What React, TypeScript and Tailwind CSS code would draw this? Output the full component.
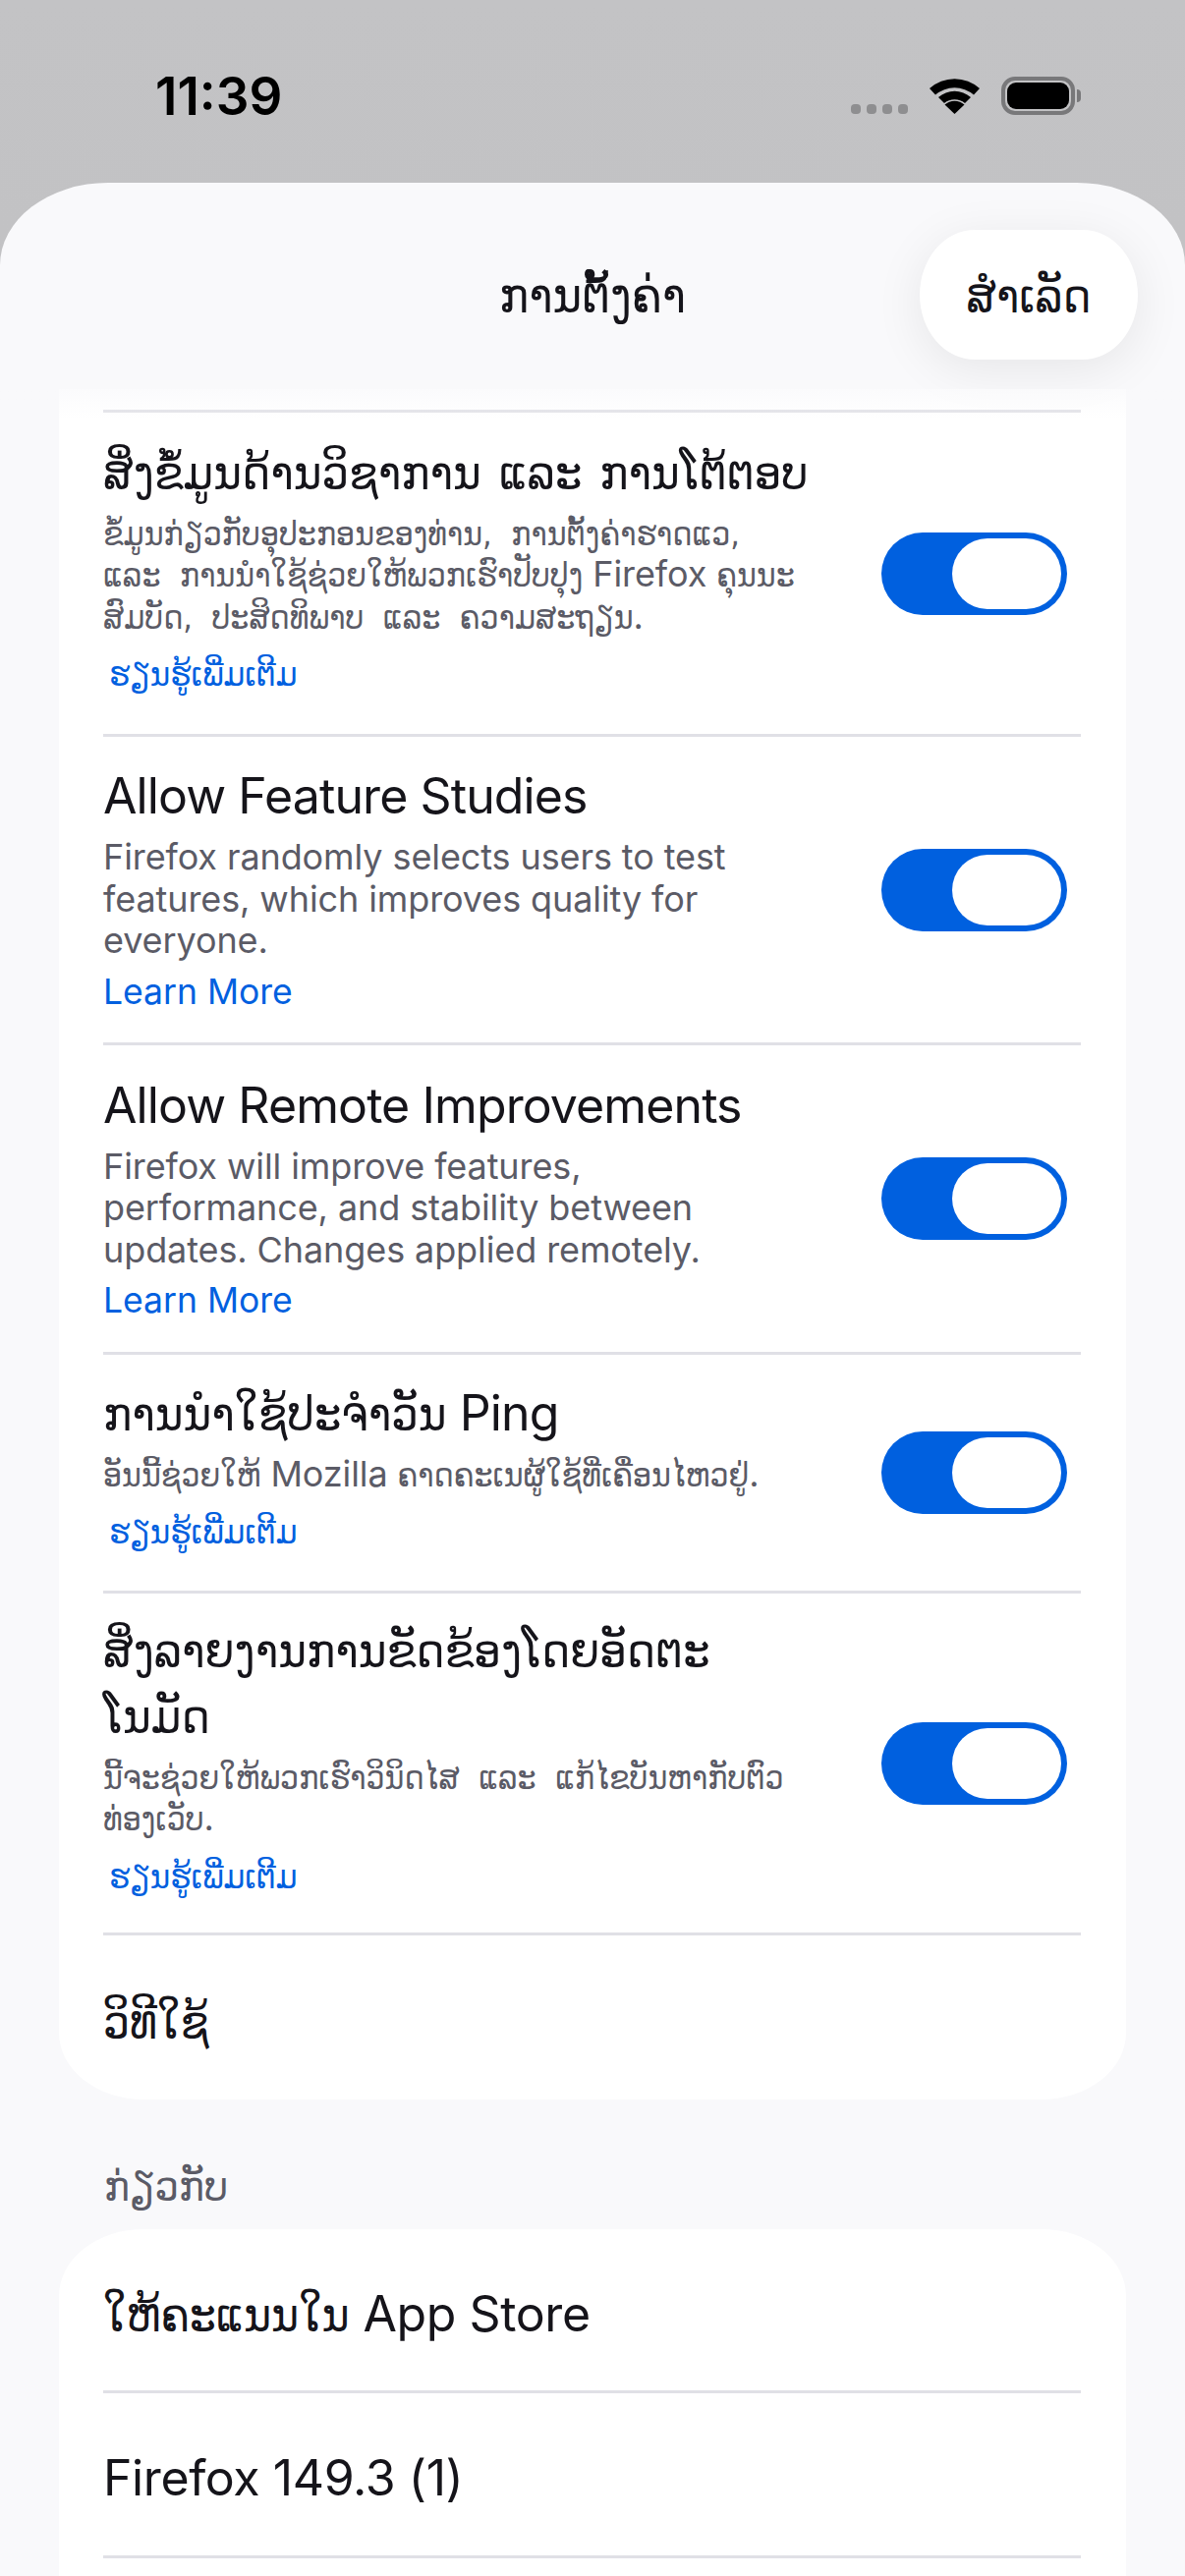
import type { ReactNode } from "react";

const learnMore = "ຮຽນຮູ້ເພີ່ມເຕີມ";

type Setting = {
    title: string;
    desc: string;
    link: string;
    height: string;
};

const settings: Setting[] = [
    {
        title: "ສິ່ງຂໍ້ມູນດ້ານວິຊາການ ແລະ ການໂຕ້ຕອບ",
        desc: "ຂໍ້ມູນກ່ຽວກັບອຸປະກອນຂອງທ່ານ, ການຕັ້ງຄ່າຮາດແວ, ແລະ ການນຳໃຊ້ຊ່ວຍໃຫ້ພວກເຮົາປັບປຸງ Firefox ຄຸນນະສົມບັດ, ປະສິດທິພາບ ແລະ ຄວາມສະຖຽນ.",
        link: learnMore,
        height: "h-[327px]",
    },
    {
        title: "Allow Feature Studies",
        desc: "Firefox randomly selects users to test features, which improves quality for everyone.",
        link: "Learn More",
        height: "h-[311px]",
    },
    {
        title: "Allow Remote Improvements",
        desc: "Firefox will improve features, performance, and stability between updates. Changes applied remotely.",
        link: "Learn More",
        height: "h-[312px]",
    },
    {
        title: "ການນຳໃຊ້ປະຈຳວັນ Ping",
        desc: "ອັນນີ້ຊ່ວຍໃຫ້ Mozilla ຄາດຄະເນຜູ້ໃຊ້ທີ່ເຄື່ອນໄຫວຢູ່.",
        link: learnMore,
        height: "h-[240px]",
    },
    {
        title: "ສິ່ງລາຍງານການຂັດຂ້ອງໂດຍອັດຕະ\nໂນມັດ",
        desc: "ນີ້ຈະຊ່ວຍໃຫ້ພວກເຮົາວິນິດໄສ ແລະ ແກ້ໄຂບັນຫາກັບຕົວທ່ອງເວັບ.",
        link: learnMore,
        height: "h-[345px]",
    },
];

// Lao runs get the condensed face and their own size, latin stays on Inter.
// Zero leading on the runs keeps each line at the height of its parent.
const mixed = (text: string, laoClass: string, latinClass: string): ReactNode =>
    text.split(/([\u0E80-\u0EFF]+(?:[ ,.]+[\u0E80-\u0EFF]+)*)/).map((part, i) =>
        part === "" ? null : (
            <span key={i} className={`leading-[0] ${/[\u0E80-\u0EFF]/.test(part) ? laoClass : latinClass}`}>
                {part}
            </span>
        )
    );

const laoFace = "font-['DejaVu_Sans_Condensed','DejaVu_Sans',sans-serif]";

const Toggle = () => (
    <div className="w-[189px] h-[84px] rounded-full bg-[#0060df] p-[6px] flex justify-end shrink-0">
        <div className="w-[111px] h-[72px] rounded-full bg-white" />
    </div>
);

const Separator = () => <div className="h-[3px] bg-[#e0e0e6]" />;

const SettingRow = ({ item }: { item: Setting }) => {
    const laoLink = item.link === learnMore;
    return (
        <div>
            <div className={`${item.height} flex items-center justify-between pr-[14px]`}>
                <div className={`w-[722px] flex flex-col ${laoLink ? "pb-[10px]" : ""}`}>
                    <div className="text-[50px] leading-[67px] whitespace-pre-line text-[#15141a]">
                        {mixed(item.title, `${laoFace} text-[48.5px] [word-spacing:4px]`, "text-[50px] tracking-[-0.9px]")}
                    </div>
                    <div className="text-[36px] leading-[42.5px] text-[#5b5b66] mt-[7px]">
                        {mixed(item.desc, `${laoFace} text-[33.5px] [word-spacing:10px]`, "text-[36px] tracking-[-0.1px]")}
                    </div>
                    <div className={`leading-[48px] text-[#0060df] ${laoLink ? `${laoFace} text-[34.5px] ml-[6px] mt-[14px]` : "text-[35.5px] mt-[7px]"}`}>
                        {item.link}
                    </div>
                </div>
                <Toggle />
            </div>
            <Separator />
        </div>
    );
};

const PlainRow = ({ label, height }: { label: string; height: string }) => (
    <div className={`${height} flex items-center pt-[8px] text-[50px] leading-[67px] text-[#15141a]`}>
        <div>{mixed(label, `${laoFace} text-[47.5px] [word-spacing:4px]`, "text-[50px] tracking-[-0.4px]")}</div>
    </div>
);

const App = () => {
    return (
        <div className="font-['Inter',sans-serif] w-[1206px] h-[2622px] overflow-hidden bg-gradient-to-b from-[#c3c3c5] to-[#b8b8ba] flex flex-col">
            {/* status bar */}
            <div className="h-[186px] shrink-0 flex justify-between pl-[158px] pr-[106px] pt-[68px]">
                <span className="text-[53px] leading-[60px] font-semibold text-black">11:39</span>
                <div className="flex items-start pt-[10px]">
                    <div className="flex gap-[6px] mt-[28px] mr-[22px]">
                        <span className="w-[10px] h-[10px] rounded-[4px] bg-[#8e8e90]" />
                        <span className="w-[10px] h-[10px] rounded-[4px] bg-[#8e8e90]" />
                        <span className="w-[10px] h-[10px] rounded-[4px] bg-[#8e8e90]" />
                        <span className="w-[10px] h-[10px] rounded-[4px] bg-[#8e8e90]" />
                    </div>
                    <svg width="51" height="37" viewBox="0 0 51 37" className="mt-[1px] mr-[22px]">
                        <path d="M25.5 37 L15.5 27.5 A15 15 0 0 1 35.5 27.5 Z" fill="#000" />
                        <path d="M9 20 A25 25 0 0 1 42 20 L36 26 A17 17 0 0 0 15 26 Z" fill="#000" />
                        <path d="M0 11 A38 38 0 0 1 51 11 L45 17.5 A30 30 0 0 0 6 17.5 Z" fill="#000" />
                    </svg>
                    <div className="flex items-center">
                        <div className="w-[75px] h-[39px] rounded-[14px] border-[4px] border-[#78787a] p-[2px]">
                            <div className="w-full h-full rounded-[9px] bg-black" />
                        </div>
                        <div className="w-[4px] h-[13px] rounded-r-full bg-[#78787a] ml-[2px]" />
                    </div>
                </div>
            </div>

            {/* settings sheet */}
            <div className="flex-1 bg-[#f9f9fb] rounded-t-[110px_84px] overflow-hidden relative">
                <div className="h-[210px] relative flex items-center justify-center">
                    <span className={`${laoFace} text-[50px] text-[#15141a] mt-[20px]`}>ການຕັ້ງຄ່າ</span>
                    <div className="absolute right-[48px] top-[48px] w-[222px] h-[132px] rounded-[56px/66px] bg-white shadow-[0_10px_50px_rgba(0,0,0,0.08)] flex items-center justify-center text-[#15141a]">
                        <span className={`${laoFace} text-[48px] mt-[2px]`}>ສຳເລັດ</span>
                    </div>
                </div>

                <div className="mx-[60px] bg-white rounded-b-[86px_68px] pt-[21px] pl-[45px] pr-[46px]">
                    <Separator />
                    {settings.map((item) => (
                        <SettingRow key={item.title} item={item} />
                    ))}
                    <PlainRow label="ວິທີໃຊ້" height="h-[167px]" />
                </div>

                <div className={`${laoFace} ml-[106px] mt-[52px] h-[80px] text-[43px] leading-[72px] text-[#5b5b66]`}>ກ່ຽວກັບ</div>

                <div className="mx-[60px] bg-white rounded-t-[86px_68px] pl-[45px] pr-[46px] pb-[60px]">
                    <PlainRow label="ໃຫ້ຄະແນນໃນ App Store" height="h-[164px]" />
                    <Separator />
                    <PlainRow label="Firefox 149.3 (1)" height="h-[165px]" />
                    <Separator />
                </div>

                <div className="absolute left-0 right-0 top-[210px] h-[30px] bg-gradient-to-b from-[#f9f9fb]/70 to-transparent" />
            </div>
        </div>
    );
};

export default App;
